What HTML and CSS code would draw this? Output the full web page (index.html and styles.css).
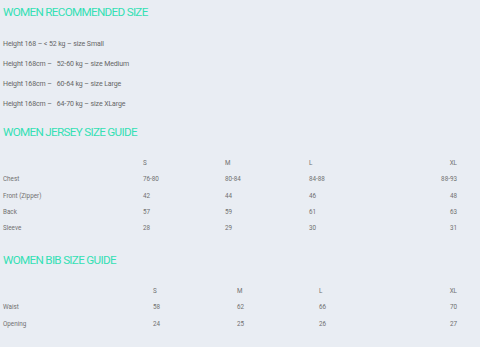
FILE: index.html
```html
<!DOCTYPE html>
<html>
<head>
<meta charset="utf-8">
<link rel="stylesheet" href="styles.css">
</head>
<body>
<div class="page">
  <h2 class="title first">WOMEN RECOMMENDED SIZE</h2>
  <div class="recs">
    <p>Height 168 – &lt; 52 kg – size Small</p>
    <p>Height 168cm –&nbsp;&nbsp; 52-60 kg – size Medium</p>
    <p>Height 168cm –&nbsp;&nbsp; 60-64 kg – size Large</p>
    <p>Height 168cm –&nbsp;&nbsp; 64-70 kg – size XLarge</p>
  </div>

  <h2 class="title second">WOMEN JERSEY SIZE GUIDE</h2>
  <div class="grid jersey">
    <span></span><span>S</span><span>M</span><span>L</span><span class="r">XL</span>
    <span>Chest</span><span>76-80</span><span>80-84</span><span>84-88</span><span class="r">88-93</span>
    <span>Front (Zipper)</span><span>42</span><span>44</span><span>46</span><span class="r">48</span>
    <span>Back</span><span>57</span><span>59</span><span>61</span><span class="r">63</span>
    <span>Sleeve</span><span>28</span><span>29</span><span>30</span><span class="r">31</span>
  </div>

  <h2 class="title third">WOMEN BIB SIZE GUIDE</h2>
  <div class="grid bib">
    <span></span><span>S</span><span>M</span><span>L</span><span class="r">XL</span>
    <span>Waist</span><span>58</span><span>62</span><span>66</span><span class="r">70</span>
    <span>Opening</span><span>24</span><span>25</span><span>26</span><span class="r">27</span>
  </div>
</div>
</body>
</html>
```

FILE: styles.css
```css
html, body {
  margin: 0;
  padding: 0;
  background: #e9edf3;
}
body {
  font-family: "Roboto", "Liberation Sans", sans-serif;
  color: #6b6b6b;
}
.page {
  padding: 0 23px 0 3px;
}
.title {
  margin: 0;
  font-weight: 400;
  font-size: 11.7px;
  line-height: 14px;
  letter-spacing: -0.7px;
  color: #34e0b4;
}
.first { padding-top: 5px; }
.recs {
  padding-top: 20px;
  display: flex;
  flex-direction: column;
  gap: 10px;
}
.recs p {
  margin: 0;
  font-size: 7px;
  line-height: 10px;
  letter-spacing: -0.1px;
  color: #666;
}
.second { margin-top: 16px; }
.third { margin-top: 20px; }
.grid {
  display: grid;
  row-gap: 6.3px;
  font-size: 6.3px;
  line-height: 10px;
  color: #707070;
  padding-top: 19px;
}
.jersey { grid-template-columns: 140px 82px 84px 1fr auto; }
.bib { grid-template-columns: 150px 84px 82px 1fr auto; }
.r { text-align: right; }
```
